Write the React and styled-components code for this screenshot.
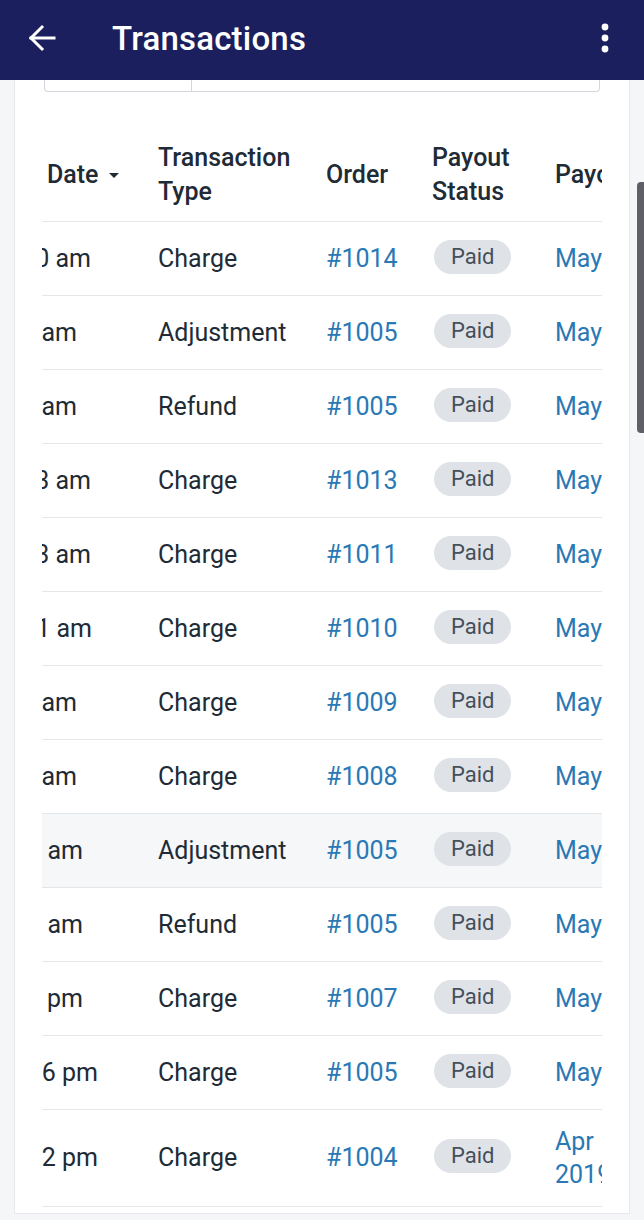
import styled, { createGlobalStyle } from "styled-components";

const GlobalStyle = createGlobalStyle`
  html, body {
    margin: 0;
    padding: 0;
    background: #f4f6f8;
  }
  body {
    font-family: Roboto, "Noto Sans", "Liberation Sans", sans-serif;
    color: #212b36;
  }
  * { box-sizing: border-box; }
`;

const Page = styled.div`
  position: relative;
  width: 644px;
  height: 1220px;
  overflow: hidden;
  background: #f4f6f8;
`;

const AppBar = styled.header`
  height: 80px;
  background: #1c1f5e;
  display: flex;
  align-items: center;
  padding: 0 34px 4px 28px;
  color: #fff;
`;

const IconButton = styled.button`
  border: none;
  background: none;
  padding: 0;
  display: flex;
  align-items: center;
  justify-content: center;
  color: #fff;
  cursor: pointer;
`;

const Title = styled.h1`
  flex: 1;
  margin: 0 0 0 56px;
  font-size: 33px;
  font-weight: 500;
  letter-spacing: 0.2px;
`;

const Card = styled.section`
  margin: 0 14px;
  background: #fff;
  border: 1px solid #e6e8eb;
  border-top: none;
  padding: 0 27px 6px 27px;
`;

const FilterRow = styled.div`
  display: flex;
  margin: 0 2px;
  height: 12px;
`;

const FilterField = styled.div`
  flex: ${(p) => (p.$grow ? 1 : "0 0 148px")};
  border: 1px solid #d3d8de;
  border-top: none;
  border-left: ${(p) => (p.$grow ? "none" : "1px solid #d3d8de")};
  border-radius: ${(p) => (p.$grow ? "0 0 4px 0" : "0 0 0 4px")};
`;

const TableClip = styled.div`
  margin-top: 37px;
  overflow: hidden;
`;

const Table = styled.div`
  width: max-content;
`;

const Row = styled.div`
  display: grid;
  grid-template-columns: 116px 168px 108px 121px 200px;
  align-items: center;
  min-height: ${(p) => (p.$head ? "93px" : "74px")};
  padding: ${(p) => (p.$head ? "0" : "15px 0")};
  border-bottom: 1px solid #e4e7ea;
  background: ${(p) => (p.$active ? "#f6f7f9" : "transparent")};
  font-size: 25px;
  line-height: 34px;
`;

const HeadCell = styled.div`
  font-weight: 500;
  color: #212b36;
  white-space: ${(p) => (p.$nowrap ? "nowrap" : "normal")};
  padding-left: ${(p) => p.$pad || 0}px;
  margin-left: ${(p) => p.$shift || 0}px;
  display: flex;
  align-items: center;
`;

const Caret = styled.span`
  display: inline-block;
  margin-left: 10px;
  width: 0;
  height: 0;
  border-left: 5px solid transparent;
  border-right: 5px solid transparent;
  border-top: 5px solid #212b36;
`;

const DateCell = styled.div`
  display: flex;
  justify-content: flex-end;
  overflow: hidden;
  white-space: nowrap;
`;

const Cell = styled.div`
  white-space: nowrap;
`;

const OrderLink = styled.a`
  color: #2a78b4;
  text-decoration: none;
`;

const Badge = styled.span`
  display: inline-flex;
  align-items: center;
  height: 34px;
  padding: 0 17px;
  border-radius: 17px;
  background: #dfe3e8;
  color: #454f5b;
  font-size: 22px;
  margin-bottom: 5px;
`;

const PayoutLink = styled.a`
  display: block;
  color: #2a78b4;
  text-decoration: none;
  white-space: ${(p) => (p.$wrap ? "normal" : "nowrap")};
  width: ${(p) => (p.$wrap ? "90px" : "auto")};
  word-spacing: ${(p) => (p.$wrap ? "4px" : "normal")};
  line-height: ${(p) => (p.$wrap ? "33px" : "inherit")};
`;

const ScrollThumb = styled.div`
  position: absolute;
  right: 0;
  top: 182px;
  width: 7px;
  height: 251px;
  border-radius: 4px 0 0 4px;
  background: #5f5f68;
`;

const rows = [
  { date: "May 24, 2019, 10:40 am", end: 49, type: "Charge", order: "#1014", payout: "May 24, 2019" },
  { date: "May 24, 2019, 9:05 am", end: 35, type: "Adjustment", order: "#1005", payout: "May 24, 2019" },
  { date: "May 24, 2019, 9:04 am", end: 35, type: "Refund", order: "#1005", payout: "May 24, 2019" },
  { date: "May 23, 2019, 11:43 am", end: 49, type: "Charge", order: "#1013", payout: "May 24, 2019" },
  { date: "May 23, 2019, 11:33 am", end: 49, type: "Charge", order: "#1011", payout: "May 24, 2019" },
  { date: "May 23, 2019, 11:11 am", end: 50, type: "Charge", order: "#1010", payout: "May 24, 2019" },
  { date: "May 23, 2019, 9:50 am", end: 35, type: "Charge", order: "#1009", payout: "May 24, 2019" },
  { date: "May 23, 2019, 9:48 am", end: 35, type: "Charge", order: "#1008", payout: "May 24, 2019" },
  { date: "May 22, 2019, 10:07 am", end: 41, type: "Adjustment", order: "#1005", payout: "May 24, 2019", active: true },
  { date: "May 22, 2019, 10:06 am", end: 41, type: "Refund", order: "#1005", payout: "May 24, 2019" },
  { date: "May 21, 2019, 4:12 pm", end: 41, type: "Charge", order: "#1007", payout: "May 24, 2019" },
  { date: "May 20, 2019, 3:16 pm", end: 56, type: "Charge", order: "#1005", payout: "May 24, 2019" },
  { date: "Apr 29, 2019, 1:52 pm", end: 56, type: "Charge", order: "#1004", payout: "Apr 30, 2019", wrap: true },
];

const BackArrow = () => (
  <svg width="28" height="28" viewBox="0 0 28 28" fill="none" stroke="currentColor" strokeWidth="3" strokeLinecap="square">
    <path d="M3 14H26" />
    <path d="M14 3L3 14L14 25" />
  </svg>
);

const Kebab = () => (
  <svg width="10" height="30" viewBox="0 0 10 30" fill="currentColor">
    <circle cx="5" cy="4" r="3.4" />
    <circle cx="5" cy="15" r="3.4" />
    <circle cx="5" cy="26" r="3.4" />
  </svg>
);

export default function App() {
  return (
    <Page>
      <GlobalStyle />
      <AppBar>
        <IconButton aria-label="Back">
          <BackArrow />
        </IconButton>
        <Title>Transactions</Title>
        <IconButton aria-label="More">
          <Kebab />
        </IconButton>
      </AppBar>

      <Card>
        <FilterRow>
          <FilterField />
          <FilterField $grow />
        </FilterRow>

        <TableClip>
          <Table>
            <Row $head>
              <HeadCell $pad={5}>
                Date <Caret />
              </HeadCell>
              <HeadCell>Transaction Type</HeadCell>
              <HeadCell>Order</HeadCell>
              <HeadCell $shift={-2}>Payout Status</HeadCell>
              <HeadCell $nowrap>Payout date</HeadCell>
            </Row>
            {rows.map((r, i) => (
              <Row key={i} $active={r.active}>
                <DateCell style={{ paddingRight: 116 - r.end }}>{r.date}</DateCell>
                <Cell>{r.type}</Cell>
                <Cell>
                  <OrderLink href="#">{r.order}</OrderLink>
                </Cell>
                <Cell>
                  <Badge>Paid</Badge>
                </Cell>
                <Cell>
                  <PayoutLink href="#" $wrap={r.wrap}>
                    {r.payout}
                  </PayoutLink>
                </Cell>
              </Row>
            ))}
          </Table>
        </TableClip>
      </Card>

      <ScrollThumb />
    </Page>
  );
}
